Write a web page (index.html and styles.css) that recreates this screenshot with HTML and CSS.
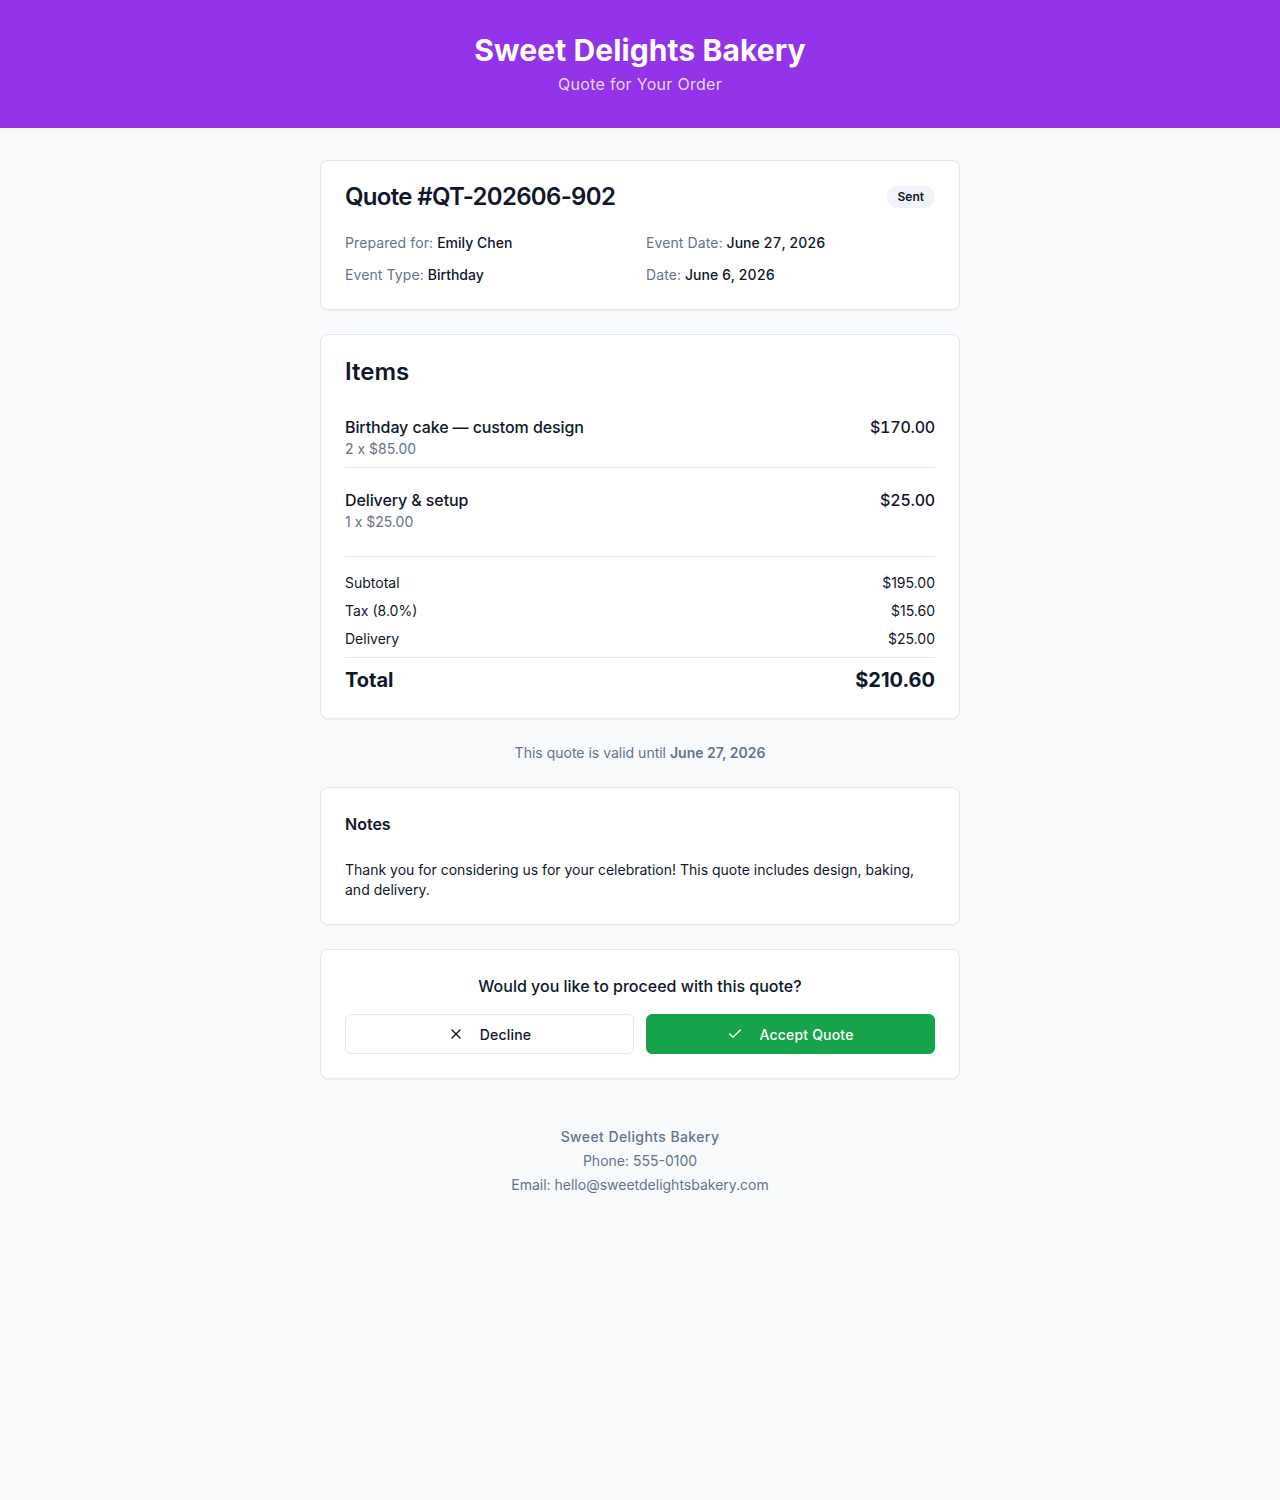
FILE: index.html
```html
<!DOCTYPE html>
<html lang="en">
<head>
<meta charset="utf-8">
<title>Sweet Delights Bakery — Quote</title>
<link rel="stylesheet" href="styles.css">
</head>
<body>
<header class="hero">
  <h1 class="hero-title">Sweet Delights Bakery</h1>
  <p class="hero-sub">Quote for Your Order</p>
</header>
<main class="wrap">
  <section class="card">
    <div class="quote-head">
      <h2 class="quote-title">Quote #QT-202606-902</h2>
      <span class="badge">Sent</span>
    </div>
    <div class="info-grid">
      <div class="info"><span class="label">Prepared for:</span> <span class="value">Emily Chen</span></div>
      <div class="info"><span class="label">Event Date:</span> <span class="value">June 27, 2026</span></div>
      <div class="info"><span class="label">Event Type:</span> <span class="value">Birthday</span></div>
      <div class="info"><span class="label">Date:</span> <span class="value">June 6, 2026</span></div>
    </div>
  </section>

  <section class="card">
    <h2 class="items-title">Items</h2>
    <div class="item">
      <div>
        <div class="item-name">Birthday cake — custom design</div>
        <div class="item-sub">2 x $85.00</div>
      </div>
      <div class="item-price">$170.00</div>
    </div>
    <div class="item item-last">
      <div>
        <div class="item-name">Delivery &amp; setup</div>
        <div class="item-sub">1 x $25.00</div>
      </div>
      <div class="item-price">$25.00</div>
    </div>
    <div class="totals">
      <div class="trow"><span>Subtotal</span><span>$195.00</span></div>
      <div class="trow"><span>Tax (8.0%)</span><span>$15.60</span></div>
      <div class="trow"><span>Delivery</span><span>$25.00</span></div>
      <div class="trow total"><span>Total</span><span>$210.60</span></div>
    </div>
  </section>

  <p class="valid">This quote is valid until <strong>June 27, 2026</strong></p>

  <section class="card">
    <h3 class="notes-title">Notes</h3>
    <p class="notes-text">Thank you for considering us for your celebration! This quote includes design, baking, and delivery.</p>
  </section>

  <section class="card action">
    <p class="question">Would you like to proceed with this quote?</p>
    <div class="buttons">
      <button class="btn btn-decline" type="button">
        <svg width="16" height="16" viewBox="0 0 24 24" fill="none" stroke="currentColor" stroke-width="2" stroke-linecap="round" stroke-linejoin="round"><path d="M18 6 6 18"/><path d="m6 6 12 12"/></svg>
        <span>Decline</span>
      </button>
      <button class="btn btn-accept" type="button">
        <svg width="16" height="16" viewBox="0 0 24 24" fill="none" stroke="currentColor" stroke-width="2" stroke-linecap="round" stroke-linejoin="round"><path d="M20 6 9 17l-5-5"/></svg>
        <span>Accept Quote</span>
      </button>
    </div>
  </section>

  <footer class="foot">
    <p class="foot-name">Sweet Delights Bakery</p>
    <p>Phone: 555-0100</p>
    <p>Email: hello@sweetdelightsbakery.com</p>
  </footer>
</main>
</body>
</html>
```

FILE: styles.css
```css
* { box-sizing: border-box; }
html, body { margin: 0; padding: 0; }
body {
  background: #f8fafc;
  font-family: Inter, "Noto Sans", "Liberation Sans", sans-serif;
  color: #0f172a;
  min-height: 1500px;
}
h1, h2, h3, p { margin: 0; }

.hero {
  background: #9333ea;
  color: #fff;
  text-align: center;
  padding: 32px 16px;
  height: 128px;
}
.hero-title {
  font-size: 30px;
  line-height: 36px;
  font-weight: 700;
  letter-spacing: 0.1px;
}
.hero-sub {
  margin-top: 4px;
  font-size: 16px;
  line-height: 24px;
  color: #e9d5ff;
  letter-spacing: 0.3px;
}

.wrap {
  width: 640px;
  margin: 0 auto;
  padding: 32px 0 48px;
  display: flex;
  flex-direction: column;
  gap: 24px;
}
.card {
  background: #fff;
  border: 1px solid #e2e8f0;
  border-radius: 8px;
  padding: 24px;
  box-shadow: 0 1px 2px rgba(15, 23, 42, 0.04);
}

.quote-head {
  display: flex;
  justify-content: space-between;
  align-items: center;
}
.quote-title {
  font-size: 24px;
  line-height: 24px;
  font-weight: 600;
  letter-spacing: -0.7px;
}
.badge {
  background: #f1f5f9;
  color: #0f172a;
  font-size: 12px;
  line-height: 16px;
  font-weight: 600;
  padding: 3px 11px;
  border-radius: 999px;
}
.info-grid {
  margin-top: 24px;
  display: grid;
  grid-template-columns: 1fr 1fr;
  column-gap: 12px;
  row-gap: 12px;
  font-size: 14px;
  line-height: 20px;
}
.label { color: #64748b; letter-spacing: 0.1px; }
.value {
  color: #0f172a;
  font-weight: 500;
  font-variant-numeric: tabular-nums;
}

.items-title {
  font-size: 24px;
  line-height: 26px;
  font-weight: 600;
  margin-bottom: 10px;
}
.item {
  display: flex;
  justify-content: space-between;
  align-items: flex-start;
  padding: 20px 0 8px;
  border-bottom: 1px solid #e2e8f0;
}
.item.item-last { border-bottom: none; }
.item-name {
  font-size: 16px;
  line-height: 24px;
  font-weight: 500;
  letter-spacing: -0.1px;
}
.item-sub {
  font-size: 14px;
  line-height: 20px;
  color: #64748b;
}
.item-price {
  font-size: 16px;
  line-height: 24px;
  font-weight: 500;
  font-variant-numeric: tabular-nums;
  letter-spacing: -0.2px;
}
.totals {
  margin-top: 16px;
  border-top: 1px solid #e2e8f0;
  padding-top: 16px;
  display: flex;
  flex-direction: column;
  gap: 8px;
}
.trow {
  display: flex;
  justify-content: space-between;
  font-size: 14px;
  line-height: 20px;
}
.trow.total {
  border-top: 1px solid #e2e8f0;
  padding-top: 8px;
  font-size: 20px;
  line-height: 28px;
  font-weight: 700;
}

.valid {
  text-align: center;
  font-size: 14px;
  line-height: 20px;
  color: #64748b;
}
.valid strong { font-weight: 600; color: #64748b; }

.notes-title {
  font-size: 16px;
  line-height: 24px;
  font-weight: 600;
}
.notes-text {
  margin-top: 24px;
  font-size: 14px;
  line-height: 20px;
  color: #0f172a;
}

.question {
  text-align: center;
  font-size: 16px;
  line-height: 24px;
  font-weight: 500;
}
.buttons {
  margin-top: 16px;
  display: flex;
  gap: 12px;
}
.btn {
  flex: 1;
  height: 40px;
  border-radius: 6px;
  display: flex;
  align-items: center;
  justify-content: center;
  gap: 16px;
  font-family: inherit;
  font-size: 14px;
  font-weight: 500;
  letter-spacing: 0.2px;
  cursor: pointer;
}
.btn-decline {
  background: #fff;
  border: 1px solid #e2e8f0;
  color: #0f172a;
}
.btn-accept {
  background: #16a34a;
  border: 1px solid #16a34a;
  color: #fff;
}

.foot {
  margin-top: 22px;
  text-align: center;
  font-size: 14px;
  line-height: 24px;
  color: #64748b;
}
.foot-name { font-weight: 500; letter-spacing: 0.4px; }
```
